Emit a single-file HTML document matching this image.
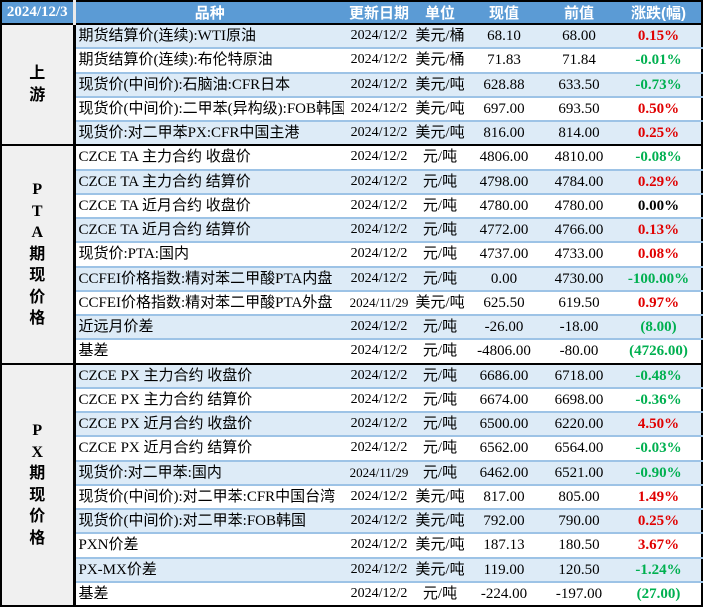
<!DOCTYPE html><html><head><meta charset="utf-8"><style>
body{margin:0;background:#fff;width:704px;height:607px;overflow:hidden}
table{position:absolute;left:0;top:0;border-collapse:collapse;table-layout:fixed;width:701px;font-family:"Liberation Serif","Noto Sans CJK SC",serif;font-size:15px;color:#000;border-top:2px solid #000;border-left:2px solid #000;border-right:2px solid #000;border-bottom:2px solid #000}
td{height:22.25px;padding:0;border-top:2px solid #9dc3e6;text-align:center;white-space:nowrap;overflow:hidden;line-height:22px}
th{height:20px;padding:0;background:#5b9bd5;color:#fff;font-family:"Liberation Sans","Noto Sans CJK SC",sans-serif;font-size:15px;font-weight:bold;border-bottom:2px solid #000}
th.d{font-family:"Liberation Serif",serif;font-size:15px;border-right:3px solid #eaeaea}
td.dt{font-size:14px}
td.n{text-align:left;padding-left:3px;font-size:15px}
tr td.s,tr.b td.s{background:#f0f0f0;border-top:2px solid #000;border-right:3px solid #000;font-family:"Liberation Serif","Noto Sans CJK SC",serif;font-weight:bold;font-size:16px;line-height:21.5px;white-space:normal}
tr.b td{background:#ddebf7}
tr.f td{border-top:2px solid #000}
.r{color:#e00000;font-weight:bold}.g{color:#00b050;font-weight:bold}.k{font-weight:bold}
</style></head><body>
<table>
<colgroup><col style="width:73px"><col style="width:270px"><col style="width:70px"><col style="width:52px"><col style="width:76px"><col style="width:74px"><col style="width:86px"></colgroup>
<tr><th class="d">2024/12/3</th><th>品种</th><th>更新日期</th><th>单位</th><th>现值</th><th>前值</th><th>涨跌(幅)</th></tr>
<tr class="b f"><td class="s" rowspan="5">上<br>游</td><td class="n">期货结算价(连续):WTI原油</td><td class="dt">2024/12/2</td><td>美元/桶</td><td>68.10</td><td>68.00</td><td class="r">0.15%</td></tr>
<tr><td class="n">期货结算价(连续):布伦特原油</td><td class="dt">2024/12/2</td><td>美元/桶</td><td>71.83</td><td>71.84</td><td class="g">-0.01%</td></tr>
<tr class="b"><td class="n">现货价(中间价):石脑油:CFR日本</td><td class="dt">2024/12/2</td><td>美元/吨</td><td>628.88</td><td>633.50</td><td class="g">-0.73%</td></tr>
<tr><td class="n">现货价(中间价):二甲苯(异构级):FOB韩国</td><td class="dt">2024/12/2</td><td>美元/吨</td><td>697.00</td><td>693.50</td><td class="r">0.50%</td></tr>
<tr class="b"><td class="n">现货价:对二甲苯PX:CFR中国主港</td><td class="dt">2024/12/2</td><td>美元/吨</td><td>816.00</td><td>814.00</td><td class="r">0.25%</td></tr>
<tr class="f"><td class="s" rowspan="9">P<br>T<br>A<br>期<br>现<br>价<br>格</td><td class="n">CZCE TA 主力合约 收盘价</td><td class="dt">2024/12/2</td><td>元/吨</td><td>4806.00</td><td>4810.00</td><td class="g">-0.08%</td></tr>
<tr class="b"><td class="n">CZCE TA 主力合约 结算价</td><td class="dt">2024/12/2</td><td>元/吨</td><td>4798.00</td><td>4784.00</td><td class="r">0.29%</td></tr>
<tr><td class="n">CZCE TA 近月合约 收盘价</td><td class="dt">2024/12/2</td><td>元/吨</td><td>4780.00</td><td>4780.00</td><td class="k">0.00%</td></tr>
<tr class="b"><td class="n">CZCE TA 近月合约 结算价</td><td class="dt">2024/12/2</td><td>元/吨</td><td>4772.00</td><td>4766.00</td><td class="r">0.13%</td></tr>
<tr><td class="n">现货价:PTA:国内</td><td class="dt">2024/12/2</td><td>元/吨</td><td>4737.00</td><td>4733.00</td><td class="r">0.08%</td></tr>
<tr class="b"><td class="n">CCFEI价格指数:精对苯二甲酸PTA内盘</td><td class="dt">2024/12/2</td><td>元/吨</td><td>0.00</td><td>4730.00</td><td class="g">-100.00%</td></tr>
<tr><td class="n">CCFEI价格指数:精对苯二甲酸PTA外盘</td><td class="dt" style="font-size:13px">2024/11/29</td><td>美元/吨</td><td>625.50</td><td>619.50</td><td class="r">0.97%</td></tr>
<tr class="b"><td class="n">近远月价差</td><td class="dt">2024/12/2</td><td>元/吨</td><td>-26.00</td><td>-18.00</td><td class="g">(8.00)</td></tr>
<tr><td class="n">基差</td><td class="dt">2024/12/2</td><td>元/吨</td><td>-4806.00</td><td>-80.00</td><td class="g">(4726.00)</td></tr>
<tr class="b f"><td class="s" rowspan="10">P<br>X<br>期<br>现<br>价<br>格</td><td class="n">CZCE PX 主力合约 收盘价</td><td class="dt">2024/12/2</td><td>元/吨</td><td>6686.00</td><td>6718.00</td><td class="g">-0.48%</td></tr>
<tr><td class="n">CZCE PX 主力合约 结算价</td><td class="dt">2024/12/2</td><td>元/吨</td><td>6674.00</td><td>6698.00</td><td class="g">-0.36%</td></tr>
<tr class="b"><td class="n">CZCE PX 近月合约 收盘价</td><td class="dt">2024/12/2</td><td>元/吨</td><td>6500.00</td><td>6220.00</td><td class="r">4.50%</td></tr>
<tr><td class="n">CZCE PX 近月合约 结算价</td><td class="dt">2024/12/2</td><td>元/吨</td><td>6562.00</td><td>6564.00</td><td class="g">-0.03%</td></tr>
<tr class="b"><td class="n">现货价:对二甲苯:国内</td><td class="dt" style="font-size:13px">2024/11/29</td><td>元/吨</td><td>6462.00</td><td>6521.00</td><td class="g">-0.90%</td></tr>
<tr><td class="n">现货价(中间价):对二甲苯:CFR中国台湾</td><td class="dt">2024/12/2</td><td>美元/吨</td><td>817.00</td><td>805.00</td><td class="r">1.49%</td></tr>
<tr class="b"><td class="n">现货价(中间价):对二甲苯:FOB韩国</td><td class="dt">2024/12/2</td><td>美元/吨</td><td>792.00</td><td>790.00</td><td class="r">0.25%</td></tr>
<tr><td class="n">PXN价差</td><td class="dt">2024/12/2</td><td>美元/吨</td><td>187.13</td><td>180.50</td><td class="r">3.67%</td></tr>
<tr class="b"><td class="n">PX-MX价差</td><td class="dt">2024/12/2</td><td>美元/吨</td><td>119.00</td><td>120.50</td><td class="g">-1.24%</td></tr>
<tr><td class="n">基差</td><td class="dt">2024/12/2</td><td>元/吨</td><td>-224.00</td><td>-197.00</td><td class="g">(27.00)</td></tr>
</table>
</body></html>
